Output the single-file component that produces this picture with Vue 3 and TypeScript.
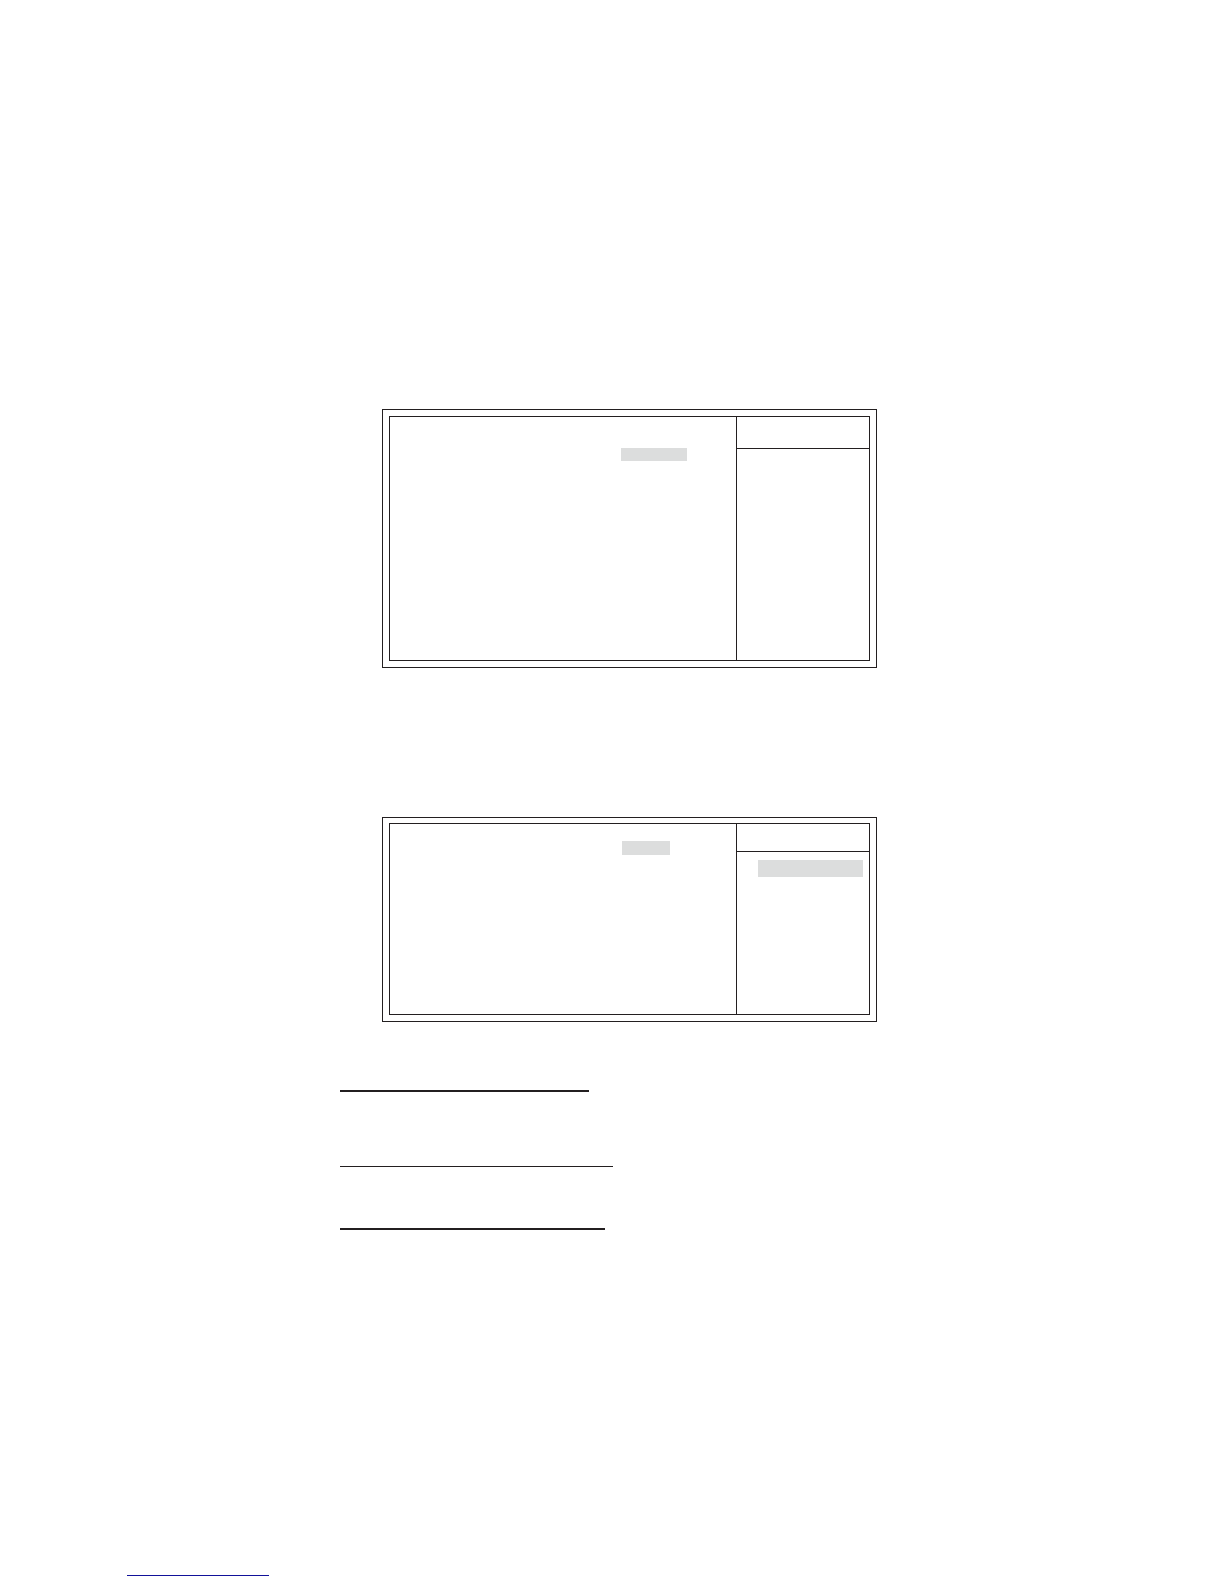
<script setup lang="ts">
interface Screen {
  id: string
  helpSelected: boolean
}

const screens: Screen[] = [
  { id: 'tall', helpSelected: false },
  { id: 'short', helpSelected: true },
]

const rules: string[] = ['first', 'second', 'third']
</script>

<template>
  <div class="page">
    <main class="content">
      <section v-for="screen in screens" :key="screen.id" class="frame" :class="screen.id">
        <div class="panel">
          <div class="settings">
            <div class="highlight"></div>
          </div>
          <aside class="help">
            <header class="help-head"></header>
            <div v-if="screen.helpSelected" class="highlight"></div>
          </aside>
        </div>
      </section>
      <hr v-for="rule in rules" :key="rule" class="rule" :class="rule" />
    </main>
    <footer class="footer">
      <hr class="footer-rule" />
    </footer>
  </div>
</template>

<style>
body {
  margin: 0;
  background: #ffffff;
}
</style>

<style scoped>
.page {
  box-sizing: border-box;
  padding: 409px 0 8px;
  font-family: "Liberation Sans", sans-serif;
}

.content {
  display: flex;
  flex-direction: column;
  align-items: flex-start;
  padding: 0 347px 0 340px;
}

.frame {
  box-sizing: border-box;
  align-self: stretch;
  margin-left: 42px;
  padding: 6px;
  border: 1px solid #231f20;
}

.panel {
  display: flex;
  border: 1px solid #231f20;
}

.settings {
  flex: 1;
}

.help {
  box-sizing: border-box;
  width: 133px;
  border-left: 1px solid #231f20;
}

.help-head {
  box-sizing: border-box;
  border-bottom: 1px solid #231f20;
}

.highlight {
  background: #dcdddd;
}

.tall .panel {
  min-height: 243px;
}

.tall .help-head {
  height: 32px;
}

.tall .settings .highlight {
  width: 66px;
  height: 13px;
  margin: 31px 49px 0 auto;
}

.short {
  margin-top: 149px;
  padding-top: 5px;
}

.short .panel {
  min-height: 190px;
}

.short .help-head {
  height: 28px;
}

.short .settings .highlight {
  width: 48px;
  height: 14px;
  margin: 17px 66px 0 auto;
}

.short .help .highlight {
  height: 17px;
  margin: 8px 6px 0 21px;
}

.rule {
  height: 2px;
  margin: 0;
  border: 0;
  background: #231f20;
}

.first {
  width: 249px;
  margin-top: 68px;
}

.second {
  width: 273px;
  height: 1px;
  margin-top: 74px;
}

.third {
  width: 265px;
  margin-top: 61px;
}

.footer {
  padding: 345px 0 0 127px;
}

.footer-rule {
  width: 142px;
  height: 1px;
  margin: 0;
  border: 0;
  background: #12129a;
}
</style>
